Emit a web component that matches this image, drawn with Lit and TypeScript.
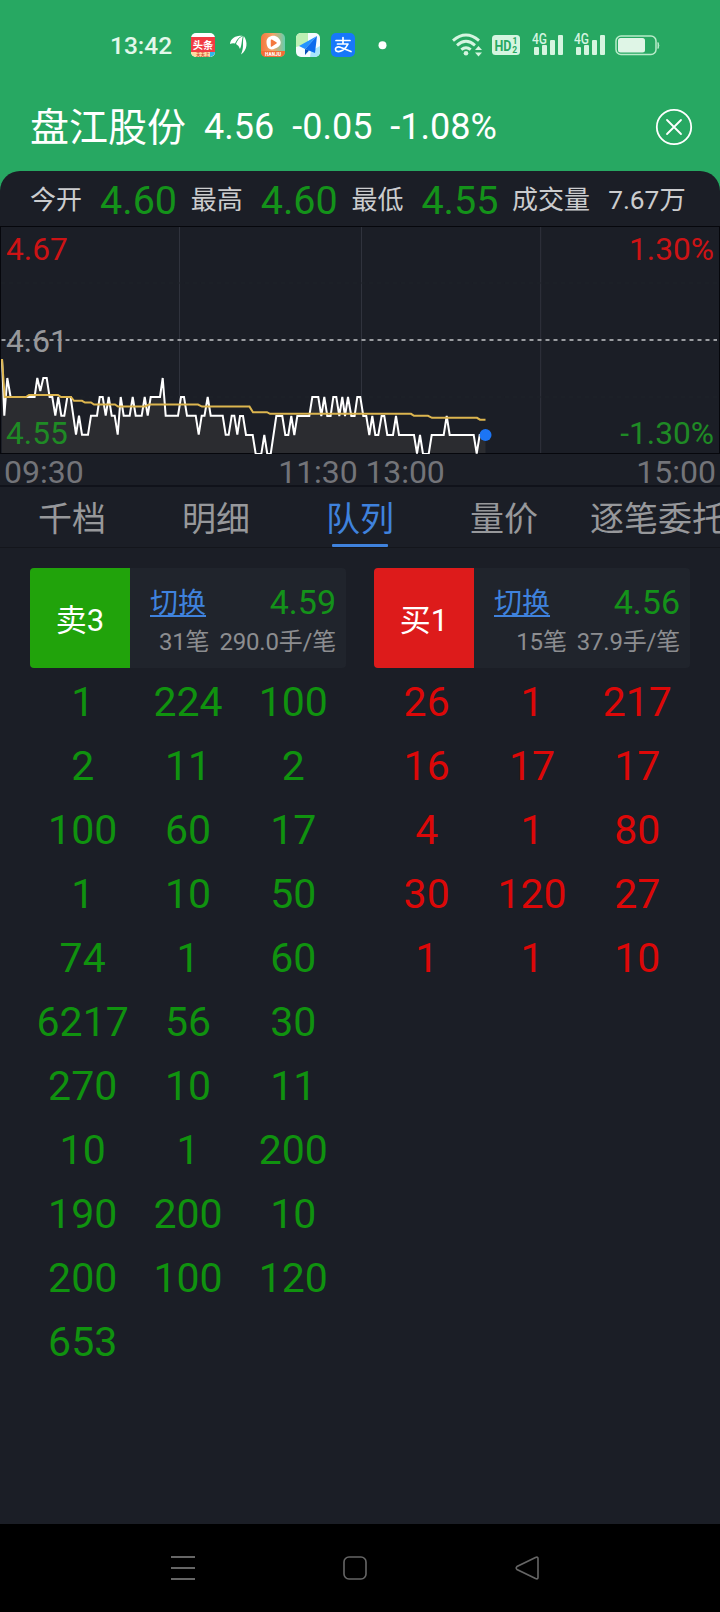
import { LitElement, html, css, svg } from "lit";
import { customElement, property } from "lit/decorators.js";
import { classMap } from "lit/directives/class-map.js";

const PRICE_LINE: [number, number][] = [
  [2, 359], [4.3, 415.7], [7.3, 378], [10.6, 397], [34.6, 397], [37.3, 378], [40.3, 391], [43.3, 378], [46.7, 378],
  [49.6, 397], [52.3, 397], [55.3, 415.7], [58.3, 397], [61.3, 415.7], [64.3, 415.7], [67.3, 397], [70.6, 397],
  [76, 434.7], [79, 415.7], [82, 434.7], [88, 434.7], [91, 415.7], [97, 415.7], [99.7, 397], [102.7, 397],
  [105.7, 415.7], [108.7, 397], [111.7, 415.7], [114.7, 415.7], [117.7, 434.7], [120.7, 397], [123.7, 415.7],
  [129.7, 415.7], [132.7, 397], [135.7, 415.7], [141.7, 415.7], [144.7, 397], [147.7, 415.7], [150.7, 397],
  [160, 397], [162.7, 378], [165.7, 415.7], [178, 415.7], [181, 397], [184, 397], [187, 415.7], [195.7, 415.7],
  [198.7, 434.7], [201.7, 415.7], [204.5, 415.7], [207.7, 397], [210.7, 415.7], [222.7, 415.7], [225.7, 434.7],
  [228.7, 434.7], [231.7, 415.7], [234.3, 415.7], [237.3, 434.7], [240, 416], [243, 416], [246, 435], [252.7, 435],
  [255.7, 454], [261.3, 454], [264.3, 435], [267.3, 454], [270.7, 454], [276.3, 416], [282.3, 416], [285.3, 435],
  [288.3, 435], [291.3, 416], [294.3, 435], [297.3, 416], [309.3, 416], [312.3, 397], [318.3, 397], [321.3, 416],
  [324.3, 397], [327.3, 416], [330.6, 416], [333.3, 397], [336.3, 397], [339.3, 416], [342.3, 397], [345, 416],
  [348, 397], [351.3, 416], [354.6, 416], [357.3, 397], [360.3, 397], [363.3, 416], [366.3, 416], [369.3, 435],
  [372.3, 416], [375.3, 435], [378.3, 435], [381.6, 416], [384.3, 416], [387.3, 435], [393, 435], [396, 416],
  [399, 435], [414, 435], [417, 453.5], [420, 435], [423, 454], [428.7, 454], [431.7, 435], [443.7, 435],
  [446.7, 416], [449.7, 435], [473.7, 435], [476.7, 453.5], [479.7, 435], [485.5, 435],
];
const AVERAGE_LINE: [number, number][] = [
  [2, 359], [4.7, 397], [26, 397], [29, 395], [58, 395], [61, 397], [71, 397], [74, 400.8], [82, 400.8], [85, 402.5],
  [91, 402.5], [94, 404.5], [115, 404.5], [118, 406.5], [145, 406.5], [149, 404.5], [198, 404.5], [202, 406.6],
  [249.5, 406.6], [253, 412.2], [267, 412.2], [270, 413.8], [411, 413.8], [414, 415.8], [428, 415.8], [432, 417.8],
  [477, 417.8], [480, 419.7], [485.5, 419.7],
];
const toPoints = (line: [number, number][]) => line.map(([x, y]) => `${x},${y - 226}`).join(" ");

const SELL_ROWS = [
  "1 224 100", "2 11 2", "100 60 17", "1 10 50", "74 1 60", "6217 56 30",
  "270 10 11", "10 1 200", "190 200 10", "200 100 120", "653",
].map((row) => row.split(" "));
const BUY_ROWS = ["26 1 217", "16 17 17", "4 1 80", "30 120 27", "1 1 10"].map((row) => row.split(" "));

@customElement("status-bar")
class StatusBar extends LitElement {
  static styles = css`
    :host { display: flex; align-items: center; height: 90px; padding: 0 60px 0 110px; box-sizing: border-box; color: #e3f8eb; }
    .time { width: 81px; font-size: 24.5px; line-height: 30px; padding-top: 2px; box-sizing: border-box; font-weight: 500; }
    .apps { display: flex; align-items: center; gap: 11px; }
    svg { display: block; flex: none; }
    .signals { display: flex; align-items: center; margin-left: auto; }
    .wifi { margin-right: 9px; }
    .hd { margin-right: 12px; }
    .cell { margin-right: 11px; }
    .cell + .cell { margin-right: 10px; }
    text { font-family: Roboto, "Noto Sans CJK SC", sans-serif; }
  `;
  private cell() {
    return html`<svg class="cell" width="31" height="24" viewBox="0 0 31 24" fill="#d5f5e0">
      <text x="0" y="11.300" font-size="15" font-weight="500" textLength="15" lengthAdjust="spacingAndGlyphs">4G</text>
      <rect x="2" y="14" width="5" height="8" rx="1" /><rect x="10" y="12" width="5" height="10" rx="1" />
      <rect x="18" y="7" width="5" height="15" rx="1" /><rect x="26" y="2" width="5" height="20" rx="1" />
    </svg>`;
  }
  render() {
    return html`
      <div class="time">13:42</div>
      <div class="apps">
        <svg width="24" height="24" viewBox="0 0 24 24">
          <rect width="24" height="24" rx="5" fill="#fff" />
          <path d="M0 4h24v15H0z" fill="#f23c43" />
          <path d="M0 19h24a5 5 0 0 1-5 5H5a5 5 0 0 1-5-5z" fill="#ffd9a2" />
          <path d="M19 19h5q0 4-5 5z" fill="#30b8e8" />
          <text x="1.800" y="15.700" font-size="10.300" font-weight="700" fill="#fff">头条</text>
          <text x="5" y="23.300" font-size="4.500" font-weight="700" fill="#d9553b">天天上</text>
        </svg>
        <svg width="24" height="24" viewBox="0 0 24 24" fill="#fff">
          <path d="M4 11C4.500 5 10 2.500 16.500 2.800C12 4.500 10.500 8 9 10.500Q6.500 9.800 4 11z" />
          <path d="M10 11C11.500 7.500 13 4.500 17 3.200C15.500 6.500 16.300 11 14 16Q13 12.500 10 11z" />
          <path d="M17.800 3C22 9 21.500 17 15 21.500C18.500 14 16 9 17.800 3z" />
        </svg>
        <svg width="24" height="24" viewBox="0 0 24 24">
          <defs><linearGradient id="video" x1="0" y1="0" x2="1" y2="0"><stop stop-color="#f4783e" /><stop offset=".5" stop-color="#f3a367" /><stop offset="1" stop-color="#63cfb0" /></linearGradient></defs>
          <rect width="24" height="24" rx="5" fill="url(#video)" />
          <path d="M0 18h24v1a5 5 0 0 1-5 5H5a5 5 0 0 1-5-5z" fill="#f36c35" />
          <path d="M5.500 9C5.500 3 13 1 17 4.500C22 9 19.500 14 14 15.500C9 18 5.500 15 5.500 9z" fill="#fff" />
          <path d="M10.500 7.200l4.500 2.800l-4.500 3z" fill="#f4783e" stroke="#f4783e" stroke-width="1.500" stroke-linejoin="round" />
          <text x="4" y="23" font-size="4.600" font-weight="900" fill="#fff" textLength="16">HANJU</text>
        </svg>
        <svg width="24" height="24" viewBox="0 0 24 24">
          <rect width="24" height="24" rx="5" fill="#f5fbff" />
          <path d="M5 0h7v11L0 14V5a5 5 0 0 1 5-5z" fill="#bdf0b4" />
          <path d="M15 18l9-5v6a5 5 0 0 1-5 5h-5z" fill="#a8e5fb" />
          <path d="M21 3L3 13l6 3z" fill="#2393ff" /><path d="M21 3L9 16l10 4z" fill="#0d6bed" /><path d="M9 16v6l4-4.500z" fill="#0850ba" />
        </svg>
        <svg width="24" height="24" viewBox="0 0 24 24">
          <rect width="24" height="24" rx="5" fill="#1778fa" />
          <path d="M5 7.500h14M12 4.500V11M6.500 11h10.500C14.500 16.500 9 20 5.200 18C3 15 6.500 13 10 14.500L20 18.500" fill="none" stroke="#fff" stroke-width="1.700" stroke-linecap="round" stroke-linejoin="round" />
        </svg>
        <svg width="34" height="24" viewBox="0 0 34 24"><circle cx="16.500" cy="12.200" r="4" fill="#fff" /></svg>
      </div>
      <div class="signals">
        <svg class="wifi" width="31" height="24" viewBox="0 0 31 24">
          <g fill="none" stroke="#d5f5e0" stroke-width="2.900"><path d="M1 7.600Q14 -3.500 27 7.600" /><path d="M5 12.300Q14 4.300 23 12.300" /><path d="M9.300 16.600Q14 12.800 18.700 16.600" /></g>
          <circle cx="14" cy="20.300" r="2.300" fill="#d5f5e0" />
          <path d="M23 17l3.500-4 3.500 4zM23 19.500h7l-3.500 4z" fill="#d5f5e0" />
        </svg>
        <svg class="hd" width="28" height="20" viewBox="0 0 28 20">
          <rect width="28" height="20" rx="3.500" fill="#d5f5e0" />
          <g fill="#27a862" font-weight="700"><text x="2.500" y="15.500" font-size="15.500" textLength="17" lengthAdjust="spacingAndGlyphs">HD</text><text x="20.500" y="9" font-size="8.500">1</text><text x="20.300" y="18" font-size="8.500">2</text></g>
        </svg>
        ${this.cell()}${this.cell()}
        <svg width="45" height="21" viewBox="0 0 45 21">
          <rect x="1" y="1" width="40" height="18.500" rx="5" fill="none" stroke="#b8ebc9" stroke-width="1.500" />
          <rect x="3" y="3" width="27" height="14.500" rx="2.500" fill="#dff5e6" />
          <path d="M43 7.500q1.700 3 0 6z" stroke="#b8ebc9" fill="#b8ebc9" />
        </svg>
      </div>`;
  }
}

@customElement("intraday-chart")
class IntradayChart extends LitElement {
  static styles = css`
    :host { display: block; }
    .plot { display: grid; height: 228px; }
    .plot > * { grid-area: 1 / 1; }
    svg { display: block; }
    .labels { z-index: 1; display: grid; grid-template-columns: auto auto; align-content: start; justify-content: space-between; padding: 5px 6px 0 6px; font-size: 31.7px; line-height: 38px; }
    .labels span { height: 92px; }
    .right { text-align: right; }
    .up { color: #cd1315; }
    .down { color: #1f8a25; }
    .flat { color: #97989b; }
    .axis { display: flex; justify-content: space-between; height: 31px; padding: 0 4px; font-size: 32px; line-height: 37px; color: #737479; border-bottom: 2px solid #10121a; }
    .mid { padding-left: 3px; letter-spacing: -0.07px; }
  `;
  render() {
    const price = toPoints(PRICE_LINE);
    return html`
      <div class="plot">
        <svg width="720" height="228" viewBox="0 0 720 228">
          <path d="M.5 0V228M719.500 0V228M0 .5H720M0 227.500H720" stroke="#06070c" />
          <path d="M179.500 1V227M361.500 1V227M540.700 1V227" stroke="#30333d" />
          <path d="M1 57H719M1 171H719" stroke="#1e2228" stroke-dasharray="4 4" />
          <path d="M1.500 114H717" stroke="#9a9ca0" stroke-width="2" stroke-dasharray="4 4" />
          <polygon points="${price} 485.500,227 2,227" fill="#2b2c30" />
          <path d="M0 227.500H486" stroke="#06070c" />
          ${svg`<polyline points=${price} fill="none" stroke="#fff" stroke-width="2" />`}
          ${svg`<polyline points=${toPoints(AVERAGE_LINE)} fill="none" stroke="#dcb54f" stroke-width="2" />`}
          <circle cx="485.500" cy="209" r="6" fill="#1c75f5" />
        </svg>
        <div class="labels">
          <span class="up">4.67</span><span class="up right">1.30%</span>
          <span class="flat">4.61</span><span></span>
          <span class="down">4.55</span><span class="down right">-1.30%</span>
        </div>
      </div>
      <div class="axis"><span>09:30</span><span class="mid">11:30 13:00</span><span>15:00</span></div>`;
  }
}

@customElement("order-queue")
class OrderQueue extends LitElement {
  @property() side = "sell";
  @property() label = "";
  @property() price = "";
  @property() orders = "";
  @property() average = "";
  @property({ attribute: false }) rows: string[][] = [];
  static styles = css`
    :host { display: block; width: 316px; }
    .card { display: flex; height: 100px; border-radius: 4px; overflow: hidden; background: #20242c; }
    .tag { display: flex; align-items: center; justify-content: center; width: 100px; padding-bottom: 2px; box-sizing: border-box; color: #fff; font-size: 31px; }
    .tag.sell { background: #21a30b; }
    .tag.buy { background: #dd1b1b; }
    .info { flex: 1; padding: 14px 10px 0 20px; }
    .top { display: flex; justify-content: space-between; line-height: 40px; height: 42px; }
    .switch { padding-top: 2px; font-size: 28px; color: #3f82dd; text-decoration: underline; text-decoration-thickness: 1.5px; text-underline-offset: 2px; }
    .price { font-size: 34px; color: #14921a; }
    .detail { display: flex; justify-content: flex-end; gap: 10px; font-size: 24px; letter-spacing: -0.2px; line-height: 36px; color: #8c8d90; }
    .queue { display: grid; grid-template-columns: repeat(3, 1fr); grid-auto-rows: 64px; padding-top: 3px; text-align: center; font-size: 41px; line-height: 63px; }
    .queue.sell { color: #10920f; }
    .queue.buy { color: #dc0808; }
  `;
  render() {
    const side = { [this.side]: true };
    return html`
      <div class="card">
        <div class=${classMap({ tag: true, ...side })}>${this.label}</div>
        <div class="info">
          <div class="top"><span class="switch">切换</span><span class="price">${this.price}</span></div>
          <div class="detail"><span>${this.orders}</span><span>${this.average}</span></div>
        </div>
      </div>
      <div class=${classMap({ queue: true, ...side })}>${this.rows.flat().map((lot) => html`<span>${lot}</span>`)}</div>`;
  }
}

@customElement("app-root")
class AppRoot extends LitElement {
  static styles = css`
    :host { display: flex; flex-direction: column; height: 1612px; width: 720px; overflow: hidden; background: #27a862; font-family: Roboto, "Noto Sans CJK SC", sans-serif; }
    .title { display: flex; align-items: center; height: 81px; padding: 0 27px 7px 30px; box-sizing: border-box; color: #fff; font-size: 36px; gap: 18px; }
    .name { font-size: 39px; padding-bottom: 6px; }
    .close { margin-left: auto; }
    .sheet { flex: 1; border-radius: 20px 20px 0 0; background: #1b1e26; overflow: hidden; }
    .stats { display: flex; align-items: center; height: 55px; padding-left: 30px; color: #cbccce; font-size: 26px; white-space: nowrap; }
    .stats span { padding-bottom: 2px; }
    .stats .value { font-size: 39.5px; color: #14921a; width: 92px; padding: 4px 0 0 18px; box-sizing: border-box; margin-right: 16.7px; }
    .stats .volume { margin-left: 18px; font-size: 26.3px; }
    .tabs { display: flex; height: 60px; border-bottom: 1px solid #14161c; font-size: 34px; line-height: 65px; color: #97989b; white-space: nowrap; }
    .tab { flex: none; width: 144px; display: flex; flex-direction: column; align-items: center; }
    .tab.wide { width: 164px; }
    .tab span { height: 57px; }
    .tab.active { color: #3f82dd; }
    .tab.active::after { content: ""; width: 56px; height: 3px; background: #3f82dd; border-radius: 1px; }
    .queues { display: flex; gap: 28px; padding: 20px 30px 0; }
    .nav { height: 88px; background: #000; display: flex; justify-content: center; align-items: center; gap: 148px; padding-right: 10px; }
  `;
  render() {
    return html`
      <status-bar></status-bar>
      <div class="title">
        <span class="name">盘江股份</span><span>4.56</span><span>-0.05</span><span>-1.08%</span>
        <svg class="close" width="38" height="38" viewBox="0 0 38 38" fill="none" stroke="#fff"><circle cx="19" cy="19" r="17.200" stroke-width="1.800" /><path d="M12 12l14 14M26 12L12 26" stroke-width="1.800" stroke-linecap="round" /></svg>
      </div>
      <main class="sheet">
        <div class="stats">
          <span>今开</span><span class="value">4.60</span><span>最高</span><span class="value">4.60</span>
          <span>最低</span><span class="value">4.55</span><span>成交量</span><span class="volume">7.67万</span>
        </div>
        <intraday-chart></intraday-chart>
        <div class="tabs">
          ${["千档", "明细", "队列", "量价", "逐笔委托"].map((name, i) => html`<div class=${classMap({ tab: true, active: i === 2, wide: i === 4 })}><span>${name}</span></div>`)}
        </div>
        <div class="queues">
          <order-queue side="sell" label="卖3" price="4.59" orders="31笔" average="290.0手/笔" .rows=${SELL_ROWS}></order-queue>
          <order-queue side="buy" label="买1" price="4.56" orders="15笔" average="37.9手/笔" .rows=${BUY_ROWS}></order-queue>
        </div>
      </main>
      <nav class="nav">
        <svg width="24" height="24" viewBox="0 0 24 24"><path d="M0 1h24M0 12h24M0 23h24" stroke="#666" stroke-width="1.800" /></svg>
        <svg width="24" height="24" viewBox="0 0 24 24"><rect x="1" y="1" width="22" height="22" rx="5" fill="none" stroke="#666" stroke-width="1.600" /></svg>
        <svg width="24" height="24" viewBox="0 0 24 24"><path d="M20.500 1.500L2 10.500Q.5 12 2 13.500L20.500 22.500Q23 23.500 23 21.500V2.500Q23 .5 20.500 1.500z" fill="none" stroke="#666" stroke-width="1.600" /></svg>
      </nav>`;
  }
}
